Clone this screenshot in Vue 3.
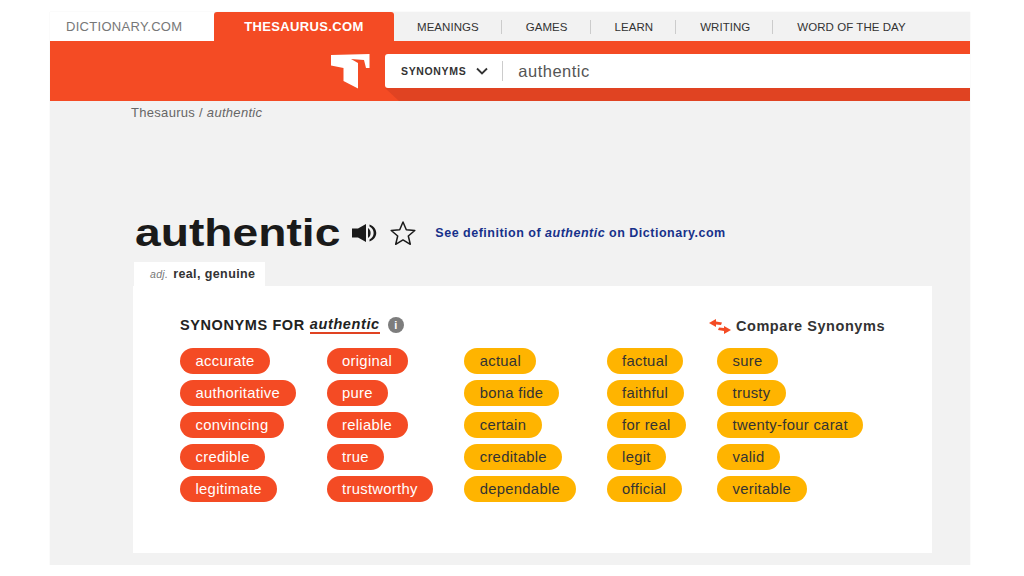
<template>
  <div class="page">
    <div class="topnav">
      <a class="site-tab">DICTIONARY.COM</a>
      <a class="site-tab active">THESAURUS.COM</a>
      <ul class="menu">
        <li v-for="item in menu" :key="item">{{ item }}</li>
      </ul>
    </div>

    <div class="search-band">
      <svg class="logo" viewBox="0 0 39 35" width="39" height="35">
        <path d="M0 1 L38.5 0 L38.5 14 L35 14 L33 6 L20 5 L27 9 L27 34.5 L12.5 27 L12.5 14 L0 11.5 Z" fill="#fff" />
      </svg>
      <div class="search-box">
        <span class="search-type">SYNONYMS</span>
        <svg class="chevron" viewBox="0 0 12 8" width="12" height="8">
          <path d="M1 1.5 L6 6.5 L11 1.5" fill="none" stroke="#333" stroke-width="1.8" />
        </svg>
        <span class="search-sep"></span>
        <span class="search-word">authentic</span>
      </div>
    </div>

    <div class="content">
      <div class="crumbs">Thesaurus / <em>authentic</em></div>

      <div class="headword">
        <h1>authentic</h1>
        <svg class="speaker" viewBox="0 0 25 18" width="25" height="18">
          <path d="M0 4.5 H6 L14 0 V18 L6 13.5 H0 Z" fill="#1a1a1a" />
          <path d="M16 4 C19.5 6 19.5 12 16 14 Z" fill="#1a1a1a" />
          <path d="M17.5 0.5 C26.5 3.5 26.5 14.5 17.5 17.5 L17.5 15.5 C23 13 23 5 17.5 2.5 Z" fill="#1a1a1a" />
        </svg>
        <svg class="star" viewBox="0 0 28 26" width="28" height="26">
          <path d="M14 2 L17.3 9.8 L25.8 10.5 L19.3 16 L21.3 24.3 L14 19.9 L6.7 24.3 L8.7 16 L2.2 10.5 L10.7 9.8 Z" fill="none" stroke="#1a1a1a" stroke-width="1.5" stroke-linejoin="round" />
        </svg>
        <a class="def-link">See definition of <em>authentic</em> on Dictionary.com</a>
      </div>

      <div class="sense-tab"><em>adj.</em> <b>real, genuine</b></div>

      <div class="card">
        <div class="card-head">
          <div class="syn-title">
            <span>SYNONYMS FOR</span>
            <em>authentic</em>
            <span class="info">i</span>
          </div>
          <div class="compare">
            <svg viewBox="0 0 22 15" width="22" height="15">
              <path d="M0 4 L7 0 L7 2.5 L13 3.5 L12 6 L7 5.5 L7 8 Z" fill="#f44b24" />
              <path d="M22 11 L15 15 L15 12 L9 11 L10 8.5 L15 9 L15 7 Z" fill="#f44b24" />
            </svg>
            <span>Compare Synonyms</span>
          </div>
        </div>
        <div class="columns">
          <div v-for="col in columns" :key="col.words[0]" class="column">
            <span v-for="w in col.words" :key="w" class="pill" :class="col.tone">{{ w }}</span>
          </div>
        </div>
      </div>
    </div>
  </div>
</template>

<script setup>
const menu = ['MEANINGS', 'GAMES', 'LEARN', 'WRITING', 'WORD OF THE DAY']

const columns = [
  { tone: 'red', words: ['accurate', 'authoritative', 'convincing', 'credible', 'legitimate'] },
  { tone: 'red', words: ['original', 'pure', 'reliable', 'true', 'trustworthy'] },
  { tone: 'amber', words: ['actual', 'bona fide', 'certain', 'creditable', 'dependable'] },
  { tone: 'amber', words: ['factual', 'faithful', 'for real', 'legit', 'official'] },
  { tone: 'amber', words: ['sure', 'trusty', 'twenty-four carat', 'valid', 'veritable'] }
]
</script>

<style>
html, body { margin: 0; background: #fff; }
</style>

<style scoped>
.page {
  width: 920px;
  height: 553px;
  margin: 12px 0 0 50px;
  background: #f2f2f2;
  box-shadow: 0 0 1px #e4e4e4;
  font-family: "Liberation Sans", Arial, sans-serif;
  color: #1a1a1a;
  overflow: hidden;
}
.topnav { display: flex; height: 29px; align-items: stretch; }
.site-tab {
  display: flex;
  align-items: center;
  font-size: 13px;
}
.site-tab:first-child {
  width: 164px;
  box-sizing: border-box;
  padding-left: 16px;
  background: #fff;
  color: #777;
  letter-spacing: 0.3px;
}
.site-tab.active {
  width: 180px;
  justify-content: center;
  background: #f44b24;
  color: #fff;
  font-weight: bold;
  letter-spacing: 0.35px;
  border-radius: 3px 3px 0 0;
}
.menu {
  display: flex;
  align-items: center;
  list-style: none;
  margin: 0;
  padding: 0 0 0 23px;
  font-size: 11.5px;
  letter-spacing: 0.05px;
  color: #333;
}
.menu li { padding-right: 22px; margin-right: 24px; border-right: 1px solid #ccc; line-height: 14px; }
.menu li:last-child { border-right: none; }

.search-band {
  display: flex;
  align-items: flex-start;
  height: 60px;
  padding: 13px 0 0 281px;
  box-sizing: border-box;
  background: #f44b24;
  gap: 15px;
}
.logo { flex: none; }
.search-box {
  position: relative;
  flex: 1;
  display: flex;
  align-items: center;
  height: 34px;
  background: #fff;
  border-radius: 3px 0 0 3px;
  padding-left: 16px;
}
.search-box::after {
  content: "";
  position: absolute;
  top: 100%;
  left: 0;
  right: 0;
  height: 13px;
  background: #e04322;
  clip-path: polygon(0 0, 100% 0, 100% 100%, 14px 100%);
}
.search-type { font-size: 10.5px; font-weight: bold; letter-spacing: 0.65px; color: #333; }
.chevron { margin-left: 10px; }
.search-sep { width: 1px; height: 20px; background: #ccc; margin-left: 14px; }
.search-word { font-size: 16.5px; letter-spacing: 0.5px; color: #555; margin-left: 15px; }

.content { padding: 0 38px 0 83px; }
.crumbs { margin-top: 5px; margin-left: -2px; height: 14px; line-height: 14px; font-size: 13px; letter-spacing: 0.3px; color: #666; }
.headword { display: flex; align-items: center; margin-top: 88px; height: 50px; }
/* the reference headline is stretched sideways, so the glyphs are widened rather than spaced */
h1 {
  margin: 0 32px 0 2px;
  font-size: 39px;
  line-height: 50px;
  font-weight: bold;
  color: #1a1a1a;
  transform: scaleX(1.185);
  transform-origin: left center;
}
.speaker { margin-left: 12px; }
.star { margin-left: 12px; }
.def-link { margin-left: 18px; font-size: 12.5px; font-weight: bold; letter-spacing: 0.5px; color: #17318a; }
.sense-tab {
  display: flex;
  align-items: center;
  gap: 5px;
  width: 131px;
  height: 24px;
  margin: 4px 0 0 1px;
  padding-left: 16px;
  box-sizing: border-box;
  background: #fff;
  font-size: 12.5px;
  letter-spacing: 0.4px;
}
.sense-tab em { color: #777; font-size: 10.5px; letter-spacing: 0.3px; }
.sense-tab b { color: #333; }
.card {
  width: 799px;
  height: 267px;
  box-sizing: border-box;
  padding: 29px 47px 0;
  background: #fff;
}
.card-head { display: flex; justify-content: space-between; align-items: center; height: 20px; }
.syn-title { display: flex; align-items: center; font-size: 14.5px; font-weight: bold; letter-spacing: 0.6px; color: #222; }
.syn-title em { margin-left: 5px; border-bottom: 2px solid #e04322; line-height: 15px; }
.info {
  display: inline-flex;
  align-items: center;
  justify-content: center;
  width: 16px;
  height: 16px;
  margin-left: 8px;
  border-radius: 50%;
  background: #7d7d7d;
  color: #fff;
  font-size: 11px;
  letter-spacing: 0;
}
.compare { display: flex; align-items: center; gap: 5px; margin-top: 2px; font-size: 14.5px; font-weight: bold; letter-spacing: 0.55px; color: #333; }
.columns { display: flex; gap: 31px; margin-top: 13px; }
.column { display: flex; flex-direction: column; align-items: flex-start; gap: 6px; }
.pill {
  height: 26px;
  line-height: 26px;
  padding: 0 15.5px;
  border-radius: 13px;
  font-size: 14.8px;
  letter-spacing: 0.3px;
  white-space: nowrap;
}
.red { background: #f44b24; color: #fff; }
.amber { background: #ffb400; color: #333; }
</style>
